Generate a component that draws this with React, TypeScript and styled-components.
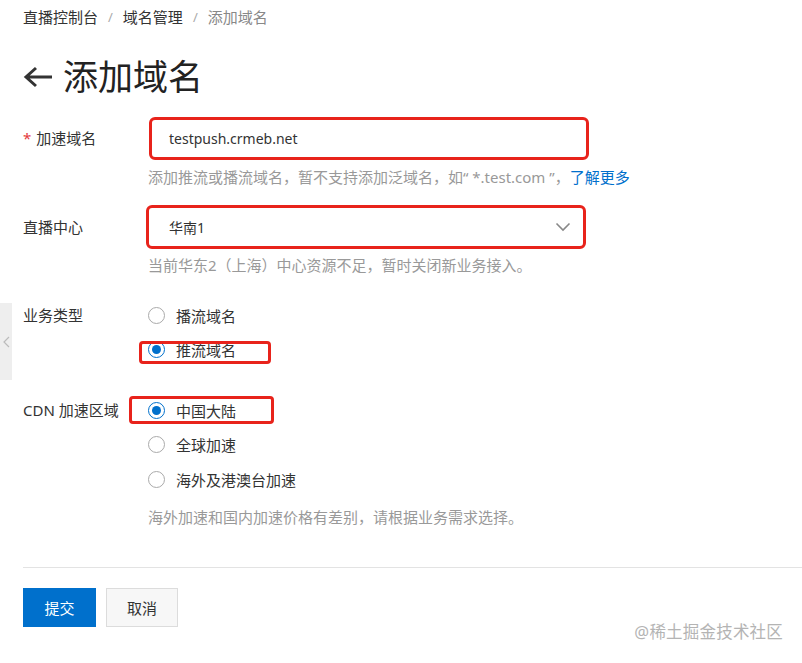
import React from "react";
import styled, { createGlobalStyle } from "styled-components";

const GlobalStyle = createGlobalStyle`
  html, body {
    margin: 0;
    padding: 0;
    background: #fff;
  }
  body {
    font-family: "Noto Sans", "Noto Sans CJK SC", sans-serif;
    color: #333;
  }
`;

const Page = styled.div`
  position: relative;
  width: 802px;
  height: 663px;
  overflow: hidden;
  padding-left: 23px;
  box-sizing: border-box;
`;

const Breadcrumb = styled.div`
  display: flex;
  align-items: center;
  gap: 10px;
  padding-top: 7px;
  height: 20px;
  font-size: 15px;
  line-height: 20px;
`;

const Crumb = styled.span<{ $current?: boolean }>`
  color: ${(p) => (p.$current ? "#888" : "#333")};
`;

const Sep = styled.span`
  color: #aaa;
  font-size: 13px;
`;

const Title = styled.h1`
  display: flex;
  align-items: center;
  gap: 10px;
  margin: 28px 0 0;
  height: 44px;
  font-size: 35px;
  font-weight: 400;
  line-height: 44px;
  color: #222;
`;

const Form = styled.div`
  margin-top: 18px;
  display: flex;
  flex-direction: column;
`;

const Row = styled.div<{ $gap?: number }>`
  display: grid;
  grid-template-columns: 125px 1fr;
  margin-top: ${(p) => p.$gap ?? 0}px;
`;

const Label = styled.div<{ $h?: number }>`
  font-size: 15px;
  line-height: ${(p) => p.$h ?? 34}px;
  color: #333;
`;

const Star = styled.span`
  color: #e4393c;
  margin-right: 5px;
`;

const Control = styled.div`
  display: flex;
  flex-direction: column;
`;

const Field = styled.div<{ $h: number; $shift?: number }>`
  display: flex;
  align-items: center;
  justify-content: space-between;
  width: 440px;
  height: ${(p) => p.$h}px;
  margin-left: ${(p) => p.$shift ?? 0}px;
  box-sizing: border-box;
  padding: 0 12px 0 ${(p) => 18 - (p.$shift ?? 0)}px;
  border: 3px solid #e8231b;
  border-radius: 6px;
  font-size: 14px;
  color: #333;
`;

const Help = styled.div<{ $gap: number }>`
  margin-top: ${(p) => p.$gap}px;
  font-size: 15px;
  line-height: 20px;
  color: #999;
`;

const Link = styled.a`
  color: #0070cc;
  text-decoration: none;
`;

const RadioRow = styled.label<{ $h?: number }>`
  position: relative;
  display: flex;
  align-items: center;
  gap: 11px;
  height: ${(p) => p.$h ?? 34}px;
  font-size: 15px;
  color: #333;
`;

const Dot = styled.span<{ $on?: boolean }>`
  width: 17px;
  height: 17px;
  box-sizing: border-box;
  border-radius: 50%;
  border: 1px solid ${(p) => (p.$on ? "#0070cc" : "#aaa")};
  display: flex;
  align-items: center;
  justify-content: center;
  background: #fff;

  &::after {
    content: "";
    display: ${(p) => (p.$on ? "block" : "none")};
    width: 9px;
    height: 9px;
    border-radius: 50%;
    background: #0070cc;
  }
`;

const Mark = styled.span<{ $l: number; $t: number; $w: number; $h: number }>`
  position: absolute;
  left: ${(p) => p.$l}px;
  top: ${(p) => p.$t}px;
  width: ${(p) => p.$w}px;
  height: ${(p) => p.$h}px;
  box-sizing: border-box;
  border: 3px solid #e8231b;
  border-radius: 4px;
  pointer-events: none;
`;

const Divider = styled.hr`
  margin: 40px 0 0;
  border: none;
  border-top: 1px solid #e3e3e3;
`;

const Actions = styled.div`
  display: flex;
  gap: 10px;
  margin-top: 20px;
`;

const Button = styled.button<{ $primary?: boolean }>`
  width: ${(p) => (p.$primary ? 73 : 72)}px;
  height: 39px;
  box-sizing: border-box;
  font-family: inherit;
  font-size: 15px;
  border: 1px solid ${(p) => (p.$primary ? "#0070cc" : "#dcdcdc")};
  background: ${(p) => (p.$primary ? "#0070cc" : "#f7f7f7")};
  color: ${(p) => (p.$primary ? "#fff" : "#333")};
  cursor: pointer;
`;

const SideTab = styled.div`
  position: absolute;
  left: 0;
  top: 303px;
  width: 12px;
  height: 77px;
  background: #eeeeee;
  display: flex;
  align-items: center;
  justify-content: center;
`;

const Watermark = styled.div`
  position: absolute;
  right: 19px;
  bottom: 20px;
  font-size: 16.5px;
  color: #b4b4b4;
  letter-spacing: 0.2px;
`;

const Arrow = () => (
  <svg width="30" height="24" viewBox="0 0 30 24">
    <path d="M13 3 L3 12 L13 21 M3 12 H29" fill="none" stroke="#333" strokeWidth="3" />
  </svg>
);

const Chevron = () => (
  <svg width="16" height="10" viewBox="0 0 16 10">
    <path d="M1.5 1.5 L8 8 L14.5 1.5" fill="none" stroke="#888" strokeWidth="1.6" />
  </svg>
);

const App: React.FC = () => {
  return (
    <Page>
      <GlobalStyle />
      <SideTab>
        <svg width="7" height="12" viewBox="0 0 7 12">
          <path d="M6 1 L1 6 L6 11" fill="none" stroke="#bbb" strokeWidth="1.2" />
        </svg>
      </SideTab>

      <Breadcrumb>
        <Crumb>直播控制台</Crumb>
        <Sep>/</Sep>
        <Crumb>域名管理</Crumb>
        <Sep>/</Sep>
        <Crumb $current>添加域名</Crumb>
      </Breadcrumb>

      <Title>
        <Arrow />
        添加域名
      </Title>

      <Form>
        <Row>
          <Label $h={43}>
            <Star>*</Star>加速域名
          </Label>
          <Control>
            <Field $h={43} $shift={1}>testpush.crmeb.net</Field>
            <Help $gap={7}>
              添加推流或播流域名，暂不支持添加泛域名，如“ *.test.com ”，<Link href="#">了解更多</Link>
            </Help>
          </Control>
        </Row>

        <Row $gap={18}>
          <Label $h={44}>直播中心</Label>
          <Control>
            <Field $h={44} $shift={-2}>
              华南1
              <Chevron />
            </Field>
            <Help $gap={6}>当前华东2（上海）中心资源不足，暂时关闭新业务接入。</Help>
          </Control>
        </Row>

        <Row $gap={23}>
          <Label>业务类型</Label>
          <Control>
            <RadioRow>
              <Dot />
              播流域名
            </RadioRow>
            <RadioRow>
              <Dot $on />
              推流域名
              <Mark $l={-9} $t={9} $w={132} $h={23} />
            </RadioRow>
          </Control>
        </Row>

        <Row $gap={27}>
          <Label>CDN 加速区域</Label>
          <Control>
            <RadioRow>
              <Dot $on />
              中国大陆
              <Mark $l={-19} $t={3} $w={145} $h={28} />
            </RadioRow>
            <RadioRow $h={35}>
              <Dot />
              全球加速
            </RadioRow>
            <RadioRow $h={35}>
              <Dot />
              海外及港澳台加速
            </RadioRow>
            <Help $gap={10}>海外加速和国内加速价格有差别，请根据业务需求选择。</Help>
          </Control>
        </Row>
      </Form>

      <Divider />

      <Actions>
        <Button $primary>提交</Button>
        <Button>取消</Button>
      </Actions>

      <Watermark>@稀土掘金技术社区</Watermark>
    </Page>
  );
};

export default App;
